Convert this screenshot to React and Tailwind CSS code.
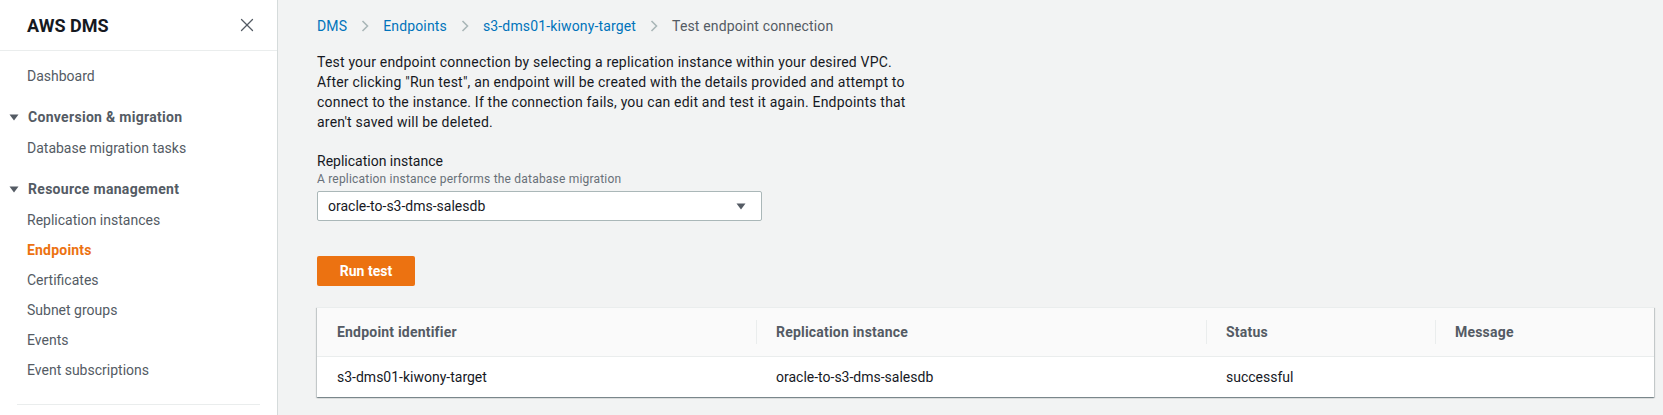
import { X } from "lucide-react";

const FONT = { fontFamily: "Roboto, 'Open Sans', Arial, sans-serif" };

function Chevron() {
  return (
    <svg width="8" height="12" viewBox="0 0 8 12" className="shrink-0">
      <path d="M1.5 1 L6.5 6 L1.5 11" fill="none" stroke="#aab7b8" strokeWidth="1.6" />
    </svg>
  );
}

function Caret() {
  return (
    <svg width="10" height="7" viewBox="0 0 10 7" className="shrink-0">
      <path d="M0.5 0.5 H9.5 L5 6.5 Z" fill="#545b64" />
    </svg>
  );
}

function NavLink({ children, active }) {
  return (
    <div
      className={`h-[30px] flex items-center pl-[27px] text-[14px] ${
        active ? "text-[#ec7211] font-bold tracking-[0.2px]" : "text-[#545b64]"
      }`}
    >
      {children}
    </div>
  );
}

function NavSection({ children }) {
  return (
    <div className="h-[31px] mt-[11px] flex items-center pl-[9px] gap-[9px] text-[14px] font-bold tracking-[0.3px] text-[#545b64]">
      <Caret />
      {children}
    </div>
  );
}

function Sidebar() {
  return (
    <aside className="w-[278px] shrink-0 bg-white border-r border-[#d5dbdb] h-[415px]">
      <div className="h-[51px] border-b border-[#eaeded] flex items-center justify-between pl-[27px] pr-[19px]">
        <span className="text-[18px] font-bold text-[#16191f]">AWS DMS</span>
        <X size={22} strokeWidth={1.4} color="#545b64" />
      </div>
      <nav className="pt-[10px]">
        <NavLink>Dashboard</NavLink>
        <NavSection>Conversion &amp; migration</NavSection>
        <NavLink>Database migration tasks</NavLink>
        <NavSection>Resource management</NavSection>
        <NavLink>Replication instances</NavLink>
        <NavLink active>Endpoints</NavLink>
        <NavLink>Certificates</NavLink>
        <NavLink>Subnet groups</NavLink>
        <NavLink>Events</NavLink>
        <NavLink>Event subscriptions</NavLink>
        <div className="mt-[19px] mx-[17px] border-t border-[#eaeded]" />
      </nav>
    </aside>
  );
}

const COLS = [
  { w: "w-[439px]", head: "Endpoint identifier", val: "s3-dms01-kiwony-target" },
  { w: "w-[450px]", head: "Replication instance", val: "oracle-to-s3-dms-salesdb" },
  { w: "w-[229px]", head: "Status", val: "successful" },
  { w: "flex-1", head: "Message", val: "" },
];

function ResultTable() {
  return (
    <div className="mt-[21px] bg-white shadow-[0_1px_1px_0_rgba(0,28,36,0.3),1px_1px_1px_0_rgba(0,28,36,0.15),-1px_1px_1px_0_rgba(0,28,36,0.15)] border-t border-[#eaeded]">
      <div className="flex h-[49px] bg-[#fafafa] border-b border-[#eaeded]">
        {COLS.map((c, i) => (
          <div key={c.head} className={`${c.w} flex items-center relative`}>
            {i > 0 && <span className="absolute left-0 top-[12px] h-[24px] border-l border-[#eaeded]" />}
            <span className="pl-[20px] text-[14px] font-bold tracking-[0.2px] text-[#545b64]">{c.head}</span>
          </div>
        ))}
      </div>
      <div className="flex h-[40px]">
        {COLS.map((c) => (
          <div key={c.head} className={`${c.w} flex items-center pl-[20px] text-[14px] text-[#16191f]`}>
            {c.val}
          </div>
        ))}
      </div>
    </div>
  );
}

export default function App() {
  return (
    <div className="flex w-[1663px] h-[415px] overflow-hidden bg-[#f2f3f3]" style={FONT}>
      <Sidebar />
      <main className="flex-1 pl-[39px] pr-[9px]">
        <div className="pt-[16px] h-[36px] flex items-center gap-[14px] text-[14px] leading-[20px] tracking-[0.15px]">
          <span className="text-[#0073bb]">DMS</span>
          <Chevron />
          <span className="text-[#0073bb]">Endpoints</span>
          <Chevron />
          <span className="text-[#0073bb]">s3-dms01-kiwony-target</span>
          <Chevron />
          <span className="text-[#545b64]">Test endpoint connection</span>
        </div>

        <p className="mt-[16px] text-[14px] leading-[20px] tracking-[0.2px] text-[#16191f] whitespace-nowrap">
          Test your endpoint connection by selecting a replication instance within your desired VPC.
          <br />
          After clicking "Run test", an endpoint will be created with the details provided and attempt to
          <br />
          connect to the instance. If the connection fails, you can edit and test it again. Endpoints that
          <br />
          aren't saved will be deleted.
        </p>

        <div className="mt-[19px] text-[14px] leading-[20px] text-[#16191f]">Replication instance</div>
        <div className="text-[12px] leading-[16px] tracking-[0.2px] text-[#687078]">
          A replication instance performs the database migration
        </div>
        <div className="mt-[4px] w-[445px] h-[30px] bg-white border border-[#aab7b8] rounded-[2px] flex items-center justify-between pl-[10px] pr-[15px] text-[14px] text-[#16191f]">
          <span>oracle-to-s3-dms-salesdb</span>
          <Caret />
        </div>

        <button className="mt-[35px] w-[98px] h-[30px] bg-[#ec7211] rounded-[2px] text-white text-[14px] font-bold flex items-center justify-center">
          Run test
        </button>

        <ResultTable />
      </main>
    </div>
  );
}
